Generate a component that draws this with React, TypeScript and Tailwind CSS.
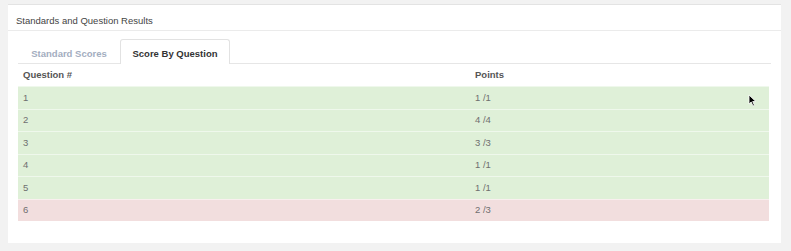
import React from 'react'

const rows = [
  { q: '1', pts: '1 /1', ok: true },
  { q: '2', pts: '4 /4', ok: true },
  { q: '3', pts: '3 /3', ok: true },
  { q: '4', pts: '1 /1', ok: true },
  { q: '5', pts: '1 /1', ok: true },
  { q: '6', pts: '2 /3', ok: false },
]

function Cursor() {
  return (
    <svg className="absolute left-[748px] top-[94px]" width="9" height="13" viewBox="0 0 9 13">
      <path d="M1 1 L1 10 L3.2 8 L5 12 L6.4 11.3 L4.7 7.5 L7.8 7.5 Z" fill="#000" stroke="#fff" strokeWidth="0.8" />
    </svg>
  )
}

export default function App() {
  return (
    <div className="relative h-[251px] w-[791px] bg-[#f2f2f2] pt-[4px] pl-[8px] font-['Liberation_Sans',Arial,sans-serif] text-[9.5px]">
      <div className="h-[239px] w-[773px] border-t border-[#e3e3e3] bg-white">
        <div className="h-[26px] border-b border-[#ebebeb] pl-[8px] pt-[10px] leading-[11px] text-[#444]">
          Standards and Question Results
        </div>
        <div className="px-[10px] pt-[8px]">
          <div className="flex h-[25px] border-b border-[#e6e6e6]">
            <div className="w-[102px] pt-[8px] text-center font-bold text-[#a3adc0]">Standard Scores</div>
            <div className="-mb-px w-[110px] rounded-t-[3px] border border-b-0 border-[#e2e2e2] bg-white pt-[7px] text-center font-bold text-[#333]">
              Score By Question
            </div>
          </div>
          <div className="w-[751px]">
            <div className="flex h-[22px] items-center pt-px font-bold text-[#555]">
              <div className="w-[452px] pl-[5px]">Question #</div>
              <div className="pl-[5px]">Points</div>
            </div>
            {rows.map((r) => (
              <div
                key={r.q}
                className={`flex h-[22.5px] items-center border-t border-white/50 text-[#6f6f6f] ${r.ok ? 'bg-[#dff0d8]' : 'bg-[#f2dede]'}`}
              >
                <div className="w-[452px] pl-[5px]">{r.q}</div>
                <div className="pl-[5px]">{r.pts}</div>
              </div>
            ))}
          </div>
        </div>
      </div>
      <Cursor />
    </div>
  )
}
